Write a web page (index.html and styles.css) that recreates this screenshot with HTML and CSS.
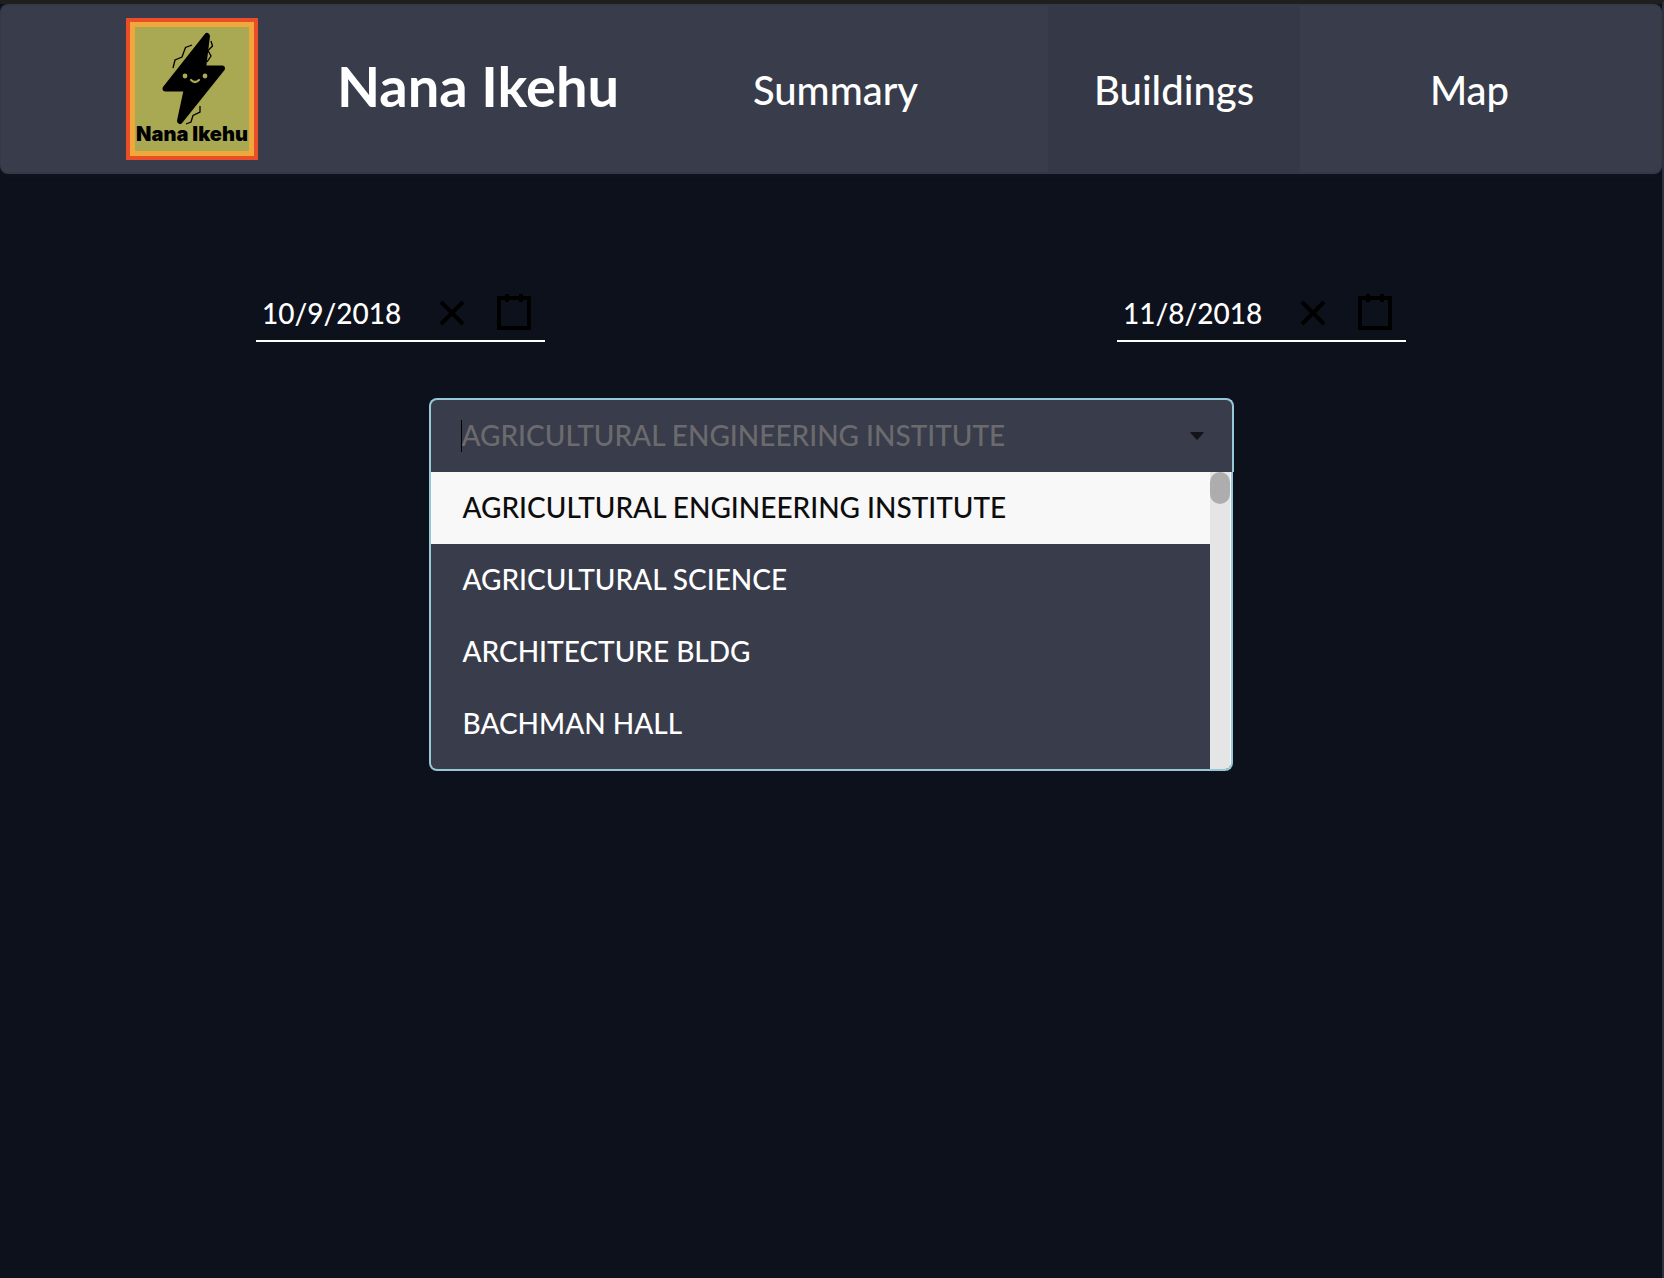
FILE: index.html
```html
<!DOCTYPE html>
<html lang="en">
<head>
<meta charset="utf-8">
<meta name="viewport" content="width=device-width, initial-scale=1">
<title>Nana Ikehu</title>
<link rel="stylesheet" href="styles.css">
</head>
<body>
<div class="page">
  <header class="navbar">
    <a class="logo" href="#" aria-label="Home">
      <svg width="132" height="142" viewBox="0 0 132 142" role="img" aria-label="Nana Ikehu logo">
        <rect width="132" height="142" fill="#e94e29"/>
        <rect x="4" y="4" width="124" height="134" fill="#f0a73c"/>
        <rect x="9" y="9" width="114" height="124" fill="#a9a853"/>
        <path d="M81 18 L77 50.500 H96 L54 103 L61 70.500 H39.500 Z" fill="#000" stroke="#000" stroke-width="6" stroke-linejoin="round"/>
        <path d="M66 27 L59.500 29.500 L56 39 L49 42 L47 50 M85 23 L86.500 28 L82 32.500 L85 38 L81 44 M74 88 L74 94 L67 97.500 L65 104 L60 106" fill="none" stroke="#000" stroke-width="1.300"/>
        <circle cx="59" cy="58" r="2.400" fill="#a9a853"/>
        <circle cx="79" cy="58" r="2.400" fill="#a9a853"/>
        <path d="M65 62 Q69 66 73 62" fill="none" stroke="#a9a853" stroke-width="2.200" stroke-linecap="round"/>
        <text class="logo-text" x="66" y="123" text-anchor="middle">Nana Ikehu</text>
      </svg>
    </a>
    <h1 class="title">Nana Ikehu</h1>
    <a class="nav-item" href="#summary">Summary</a>
    <a class="nav-item active" href="#buildings">Buildings</a>
    <a class="nav-item" href="#map">Map</a>
  </header>

  <main class="content">
    <div class="dates">
      <div class="date-picker">
        <input class="date-input" type="text" value="10/9/2018" aria-label="Start date">
        <button class="icon-button" type="button" aria-label="Clear start date">
          <svg width="38" height="38" viewBox="0 0 19 19"><path d="M4 4L15 15M15 4L4 15"/></svg>
        </button>
        <button class="icon-button" type="button" aria-label="Open start calendar">
          <svg width="38" height="38" viewBox="0 0 19 19"><path d="M2 2H17V17H2ZM6 0V4M13 0V4"/></svg>
        </button>
      </div>
      <div class="date-picker">
        <input class="date-input" type="text" value="11/8/2018" aria-label="End date">
        <button class="icon-button" type="button" aria-label="Clear end date">
          <svg width="38" height="38" viewBox="0 0 19 19"><path d="M4 4L15 15M15 4L4 15"/></svg>
        </button>
        <button class="icon-button" type="button" aria-label="Open end calendar">
          <svg width="38" height="38" viewBox="0 0 19 19"><path d="M2 2H17V17H2ZM6 0V4M13 0V4"/></svg>
        </button>
      </div>
    </div>

    <div class="dropdown">
      <div class="dropdown-head">
        <span class="caret"></span>
        <input class="search" type="text" role="combobox" aria-expanded="true" aria-controls="buildings" aria-label="Building" placeholder="AGRICULTURAL ENGINEERING INSTITUTE">
        <button class="toggle" type="button" aria-label="Toggle building list">
          <svg width="14" height="8" viewBox="0 0 14 8"><path d="M1 0H13Q14 0 13.500 1L7.500 7.500Q7 8 6.500 7.500L.5 1Q0 0 1 0Z"/></svg>
        </button>
      </div>
      <div class="menu">
        <ul class="options" id="buildings" role="listbox" aria-label="Buildings">
          <li class="option selected" role="option" aria-selected="true">AGRICULTURAL ENGINEERING INSTITUTE</li>
          <li class="option" role="option">AGRICULTURAL SCIENCE</li>
          <li class="option" role="option">ARCHITECTURE BLDG</li>
          <li class="option" role="option">BACHMAN HALL</li>
        </ul>
        <div class="scrollbar"><div class="thumb"></div></div>
      </div>
    </div>
  </main>
</div>
</body>
</html>
```
FILE: styles.css
```css
* {
  box-sizing: border-box;
}

body {
  margin: 0;
  background: #0d111c;
  color: #fff;
  font-family: Lato, "Liberation Sans", sans-serif;
  font-size: 28px;
  font-weight: 500;
}

.page {
  min-height: 100vh;
  border-top: 4px solid #1f1f1f;
  border-right: 2px solid #2f323c;
  overflow: hidden;
}

.navbar {
  display: grid;
  grid-template-columns: 282fr 290fr 425fr 252fr 339fr;
  height: 170px;
  padding: 0 22px 0 50px;
  background: #393c4a;
  border: 2px solid #363846;
  border-width: 2px 1px;
  border-radius: 8px;
  box-shadow: 0 2px 4px #0e1620;
}

.logo,
.title,
.nav-item {
  display: flex;
  align-items: center;
  justify-content: center;
}

.logo-text {
  font-family: Inter, sans-serif;
  font-size: 20px;
  font-weight: 900;
}

.title {
  margin: 0;
  padding-bottom: 8px;
  font-size: 56px;
  font-weight: 700;
  white-space: nowrap;
}

.nav-item {
  padding-top: 2px;
  color: #fff;
  font-size: 40px;
  text-decoration: none;
}

.nav-item.active {
  background: #353846;
}

.content {
  padding-top: 112px;
}

.dates {
  display: grid;
  grid-template-columns: 1fr 1fr;
  justify-items: center;
  margin: 0 -30px;
}

.date-picker {
  display: flex;
  width: 289px;
  border-bottom: 2px solid #fff;
}

.date-input {
  flex: 1;
  min-width: 0;
  padding: 0 6px;
  border: 0;
  outline: 0;
  background: none;
  color: #fff;
  font: inherit;
}

.icon-button {
  display: flex;
  padding: 8px 12px;
  border: 0;
  background: none;
}

.icon-button svg {
  fill: none;
  stroke: #000;
  stroke-width: 2;
}

.dropdown {
  width: calc(50% - 26px);
  margin: 56px auto 0;
}

.dropdown-head {
  display: flex;
  align-items: center;
  height: 74px;
  padding: 0 28px 0 30px;
  border: 2px solid #96c8da;
  border-bottom: 0;
  border-radius: 8px 8px 0 0;
  background: #393c4a;
}

.caret {
  width: 1px;
  height: 32px;
  background: #000;
}

.search {
  flex: 1;
  min-width: 0;
  padding: 0 0 2px;
  border: 0;
  outline: 0;
  background: none;
  color: #fff;
  font: inherit;
}

.search::placeholder {
  color: #6b6b6e;
  opacity: 1;
}

.toggle {
  display: flex;
  padding: 0;
  border: 0;
  background: none;
  fill: #131418;
}

.menu {
  display: flex;
  height: 299px;
  margin-right: 1px;
  border: 2px solid #96c8da;
  border-top: 0;
  border-radius: 0 0 8px 8px;
  background: #393c4a;
  overflow: hidden;
}

.options {
  flex: 1;
  margin: 0;
  padding: 0;
  list-style: none;
}

.option {
  padding: 0 32px 2px;
  line-height: 70px;
}

.option.selected {
  background: #f8f8f8;
  color: #0d0d0d;
}

.scrollbar {
  width: 21px;
  border-right: 1px solid #fafafa;
  background: #e5e5e5;
}

.thumb {
  height: 32px;
  border-radius: 10px;
  background: #adadad;
}
```
